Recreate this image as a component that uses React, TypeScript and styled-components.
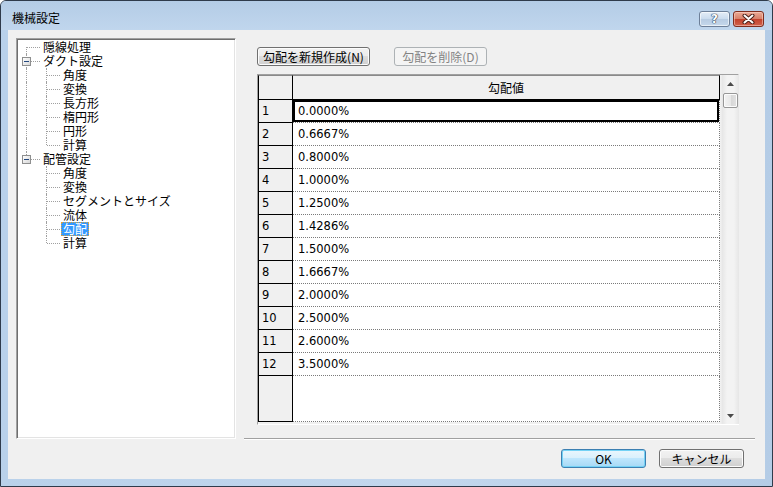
import React from 'react'
import styled, { createGlobalStyle } from 'styled-components'

const GlobalStyle = createGlobalStyle`
  html, body {
    margin: 0;
    padding: 0;
    background: #ffffff;
  }
  body {
    font-family: "Noto Sans CJK JP", "DejaVu Sans", sans-serif;
    font-size: 12px;
    color: #000;
  }
`

const Window = styled.div`
  box-sizing: border-box;
  width: 773px;
  height: 487px;
  border: 1px solid #2f3b4b;
  border-radius: 6px 6px 0 0;
  background: linear-gradient(to right, #b9d1ea, #c3d7ed 55%, #b4cce6);
  display: flex;
  flex-direction: column;
  overflow: hidden;
`

const TitleBar = styled.div`
  height: 29px;
  flex: none;
  display: flex;
  align-items: flex-start;
  justify-content: space-between;
  padding: 0 8px 0 11px;
  background: linear-gradient(to bottom, #b4cce6, #c0d6ed);
`

const TitleText = styled.span`
  margin-top: 9px;
  line-height: 16px;
  font-size: 12px;
`

const CaptionButtons = styled.div`
  display: flex;
  gap: 3px;
  margin-top: 10px;
`

const HelpButton = styled.div`
  box-sizing: border-box;
  width: 31px;
  height: 16px;
  border: 1px solid #6d7f98;
  border-radius: 3px;
  background: linear-gradient(to bottom, #e4edf7, #cadbee 50%, #b7cbe2 51%, #c5d8ec);
  box-shadow: inset 0 0 0 1px rgba(255, 255, 255, 0.6);
  display: flex;
  align-items: center;
  justify-content: center;
  font-family: "DejaVu Sans", sans-serif;
  font-weight: bold;
  font-size: 12px;
  color: #fff;
  text-shadow: 0 0 1px #1e2f4a, 0 0 1px #1e2f4a, 0 0 1px #1e2f4a;
`

const CloseButton = styled.div`
  box-sizing: border-box;
  width: 31px;
  height: 16px;
  border: 1px solid #7e2d1e;
  border-radius: 3px;
  background: linear-gradient(to bottom, #eaa995, #d8816b 48%, #c4422c 52%, #d0624c);
  box-shadow: inset 0 0 0 1px rgba(255, 220, 210, 0.5);
  display: flex;
  align-items: center;
  justify-content: center;
`

const Client = styled.div`
  flex: 1;
  margin: 0 7px 7px 7px;
  background: #f0f0f0;
  padding: 8px 10px 0 8px;
  display: flex;
  flex-direction: column;
`

const MainRow = styled.div`
  display: flex;
  gap: 8px;
  height: 401px;
`

const TreeBox = styled.div`
  box-sizing: border-box;
  width: 220px;
  height: 401px;
  flex: none;
  background: #fff;
  border: 1px solid;
  border-color: #a0a0a0 #ffffff #ffffff #a0a0a0;
  box-shadow: inset 1px 1px 0 #6e6e6e, inset -1px -1px 0 #e3e3e3;
  padding: 1px 0 0 1px;
`

const TreeRow = styled.div`
  display: flex;
  align-items: center;
  height: 14px;
`

type GuideKind = 'first' | 'branch' | 'last' | 'pipe' | 'blank'

const Guide = styled.span<{ $kind: GuideKind }>`
  position: relative;
  flex: none;
  width: 20px;
  height: 14px;

  &::before {
    content: '';
    display: ${p => (p.$kind === 'blank' ? 'none' : 'block')};
    position: absolute;
    left: 8px;
    top: ${p => (p.$kind === 'first' ? '7px' : '0')};
    bottom: ${p => (p.$kind === 'last' ? '7px' : '0')};
    border-left: 1px dotted #a0a0a0;
  }

  &::after {
    content: '';
    display: ${p => (p.$kind === 'pipe' || p.$kind === 'blank' ? 'none' : 'block')};
    position: absolute;
    left: 9px;
    top: 7px;
    width: 13px;
    border-top: 1px dotted #a0a0a0;
  }
`

const ExpandBox = styled.span`
  position: absolute;
  z-index: 1;
  left: 4px;
  top: 3px;
  box-sizing: border-box;
  width: 9px;
  height: 9px;
  border: 1px solid #8e8f8f;
  background: linear-gradient(to bottom right, #ffffff, #d7d7d7);

  &::after {
    content: '';
    position: absolute;
    left: 1px;
    top: 3px;
    width: 5px;
    height: 1px;
    background: #24487e;
  }
`

const TreeLabel = styled.span<{ $selected?: boolean }>`
  margin-left: 3px;
  padding: 0 2px;
  height: 14px;
  line-height: 14px;
  white-space: nowrap;
  font-size: 12px;
  color: ${p => (p.$selected ? '#ffffff' : '#000000')};
  background: ${p => (p.$selected ? '#3399ff' : 'transparent')};
  outline: ${p => (p.$selected ? '1px dotted #d9a443' : 'none')};
  outline-offset: -1px;
`

const RightPanel = styled.div`
  box-sizing: border-box;
  flex: 1;
  height: 401px;
  padding: 9px 0 0 13px;
  border-bottom: 1px solid #a0a0a0;
  box-shadow: 0 1px 0 #ffffff;
  display: flex;
  flex-direction: column;
`

const ButtonBar = styled.div`
  display: flex;
  gap: 24px;
`

type ButtonKind = 'normal' | 'default' | 'disabled'

const Button = styled.div<{ $width: number; $kind?: ButtonKind }>`
  box-sizing: border-box;
  width: ${p => p.$width}px;
  height: 19px;
  border-radius: 3px;
  display: flex;
  align-items: center;
  justify-content: center;
  font-size: 12px;
  line-height: 14px;
  white-space: nowrap;
  border: 1px solid
    ${p => (p.$kind === 'disabled' ? '#adb2b5' : p.$kind === 'default' ? '#3c7fb1' : '#707070')};
  color: ${p => (p.$kind === 'disabled' ? '#838383' : '#000000')};
  background: ${p =>
    p.$kind === 'disabled'
      ? '#f4f4f4'
      : p.$kind === 'default'
        ? 'linear-gradient(to bottom, #eaf6fd 0%, #d9f0fc 49%, #bee6fd 50%, #a7d9f5 100%)'
        : 'linear-gradient(to bottom, #f2f2f2 0%, #ebebeb 49%, #dddddd 50%, #cfcfcf 100%)'};
  box-shadow: ${p =>
    p.$kind === 'disabled'
      ? 'none'
      : p.$kind === 'default'
        ? 'inset 0 0 0 1px #74d2f5'
        : 'inset 0 0 0 1px #fcfcfc'};
`

const Grid = styled.div`
  box-sizing: border-box;
  margin-top: 8px;
  width: 482px;
  height: 351px;
  border: 1px solid;
  border-color: #a0a0a0 #ffffff #ffffff #a0a0a0;
  background: #f0f0f0;
  display: flex;
`

const GridBody = styled.div`
  width: 463px;
  flex: none;
  display: grid;
  grid-template-columns: 35px 427px;
  align-content: start;
`

const HeadCell = styled.div<{ $corner?: boolean }>`
  box-sizing: border-box;
  height: 25px;
  background: #f0f0f0;
  border-top: 1px solid #8a8a8a;
  border-bottom: 1px solid #000;
  border-right: 1px solid #000;
  border-left: ${p => (p.$corner ? '1px solid #000' : 'none')};
  display: flex;
  align-items: center;
  justify-content: center;
  font-size: 12px;
`

const RowHead = styled.div<{ $height?: number }>`
  box-sizing: border-box;
  height: ${p => p.$height ?? 23}px;
  background: #f0f0f0;
  border-left: 1px solid #000;
  border-right: 1px solid #000;
  border-bottom: 1px solid #000;
  padding-left: 3px;
  display: flex;
  align-items: center;
  font-family: "DejaVu Sans", sans-serif;
  font-size: 11.5px;
`

const DataCell = styled.div<{ $height?: number; $active?: boolean }>`
  box-sizing: border-box;
  height: ${p => p.$height ?? 23}px;
  background: #fff;
  border-right: 1px dotted #7a7a7a;
  border-bottom: 1px dotted #7a7a7a;
  padding-left: 5px;
  display: flex;
  align-items: center;
  font-family: "DejaVu Sans", sans-serif;
  font-size: 11.5px;
  box-shadow: ${p => (p.$active ? 'inset 0 0 0 2px #000' : 'none')};
`

const ScrollBar = styled.div`
  width: 17px;
  flex: none;
  display: flex;
  flex-direction: column;
  align-items: center;
  background: linear-gradient(to right, #e6e6e6, #f3f3f3 30%, #f3f3f3 70%, #e6e6e6);
  border-left: 1px solid #ececec;
`

const ScrollArrow = styled.div`
  width: 17px;
  height: 17px;
  flex: none;
  display: flex;
  align-items: center;
  justify-content: center;
`

const ScrollThumb = styled.div`
  box-sizing: border-box;
  width: 15px;
  height: 15px;
  flex: none;
  margin-top: 1px;
  border: 1px solid #979797;
  border-radius: 2px;
  background: linear-gradient(to right, #f3f3f3, #e8e8e8 50%, #d6d6d6 51%, #e2e2e2);
  box-shadow: inset 0 0 0 1px #fcfcfc;
`

const ScrollTrack = styled.div`
  flex: 1;
`

const Footer = styled.div`
  display: flex;
  justify-content: flex-end;
  gap: 13px;
  padding: 10px 11px 0 0;
`

const Arrow = ({ down }: { down?: boolean }) => (
  <svg width="7" height="4" viewBox="0 0 7 4">
    <path d={down ? 'M0 0 L7 0 L3.5 4 Z' : 'M0 4 L7 4 L3.5 0 Z'} fill="#4a4a4a" />
  </svg>
)

interface TreeNode {
  label: string
  guides: GuideKind[]
  box?: boolean
  selected?: boolean
}

const treeRows: TreeNode[] = [
  { label: '隠線処理', guides: ['first'] },
  { label: 'ダクト設定', guides: ['branch'], box: true },
  { label: '角度', guides: ['pipe', 'branch'] },
  { label: '変換', guides: ['pipe', 'branch'] },
  { label: '長方形', guides: ['pipe', 'branch'] },
  { label: '楕円形', guides: ['pipe', 'branch'] },
  { label: '円形', guides: ['pipe', 'branch'] },
  { label: '計算', guides: ['pipe', 'last'] },
  { label: '配管設定', guides: ['last'], box: true },
  { label: '角度', guides: ['blank', 'branch'] },
  { label: '変換', guides: ['blank', 'branch'] },
  { label: 'セグメントとサイズ', guides: ['blank', 'branch'] },
  { label: '流体', guides: ['blank', 'branch'] },
  { label: '勾配', guides: ['blank', 'branch'], selected: true },
  { label: '計算', guides: ['blank', 'last'] },
]

const slopes = [
  '0.0000%', '0.6667%', '0.8000%', '1.0000%', '1.2500%', '1.4286%',
  '1.5000%', '1.6667%', '2.0000%', '2.5000%', '2.6000%', '3.5000%',
]

const App = () => {
  return (
    <>
      <GlobalStyle />
      <Window>
        <TitleBar>
          <TitleText>機械設定</TitleText>
          <CaptionButtons>
            <HelpButton>?</HelpButton>
            <CloseButton>
              <svg width="13" height="10" viewBox="0 0 13 10">
                <path d="M2.5 1.5 L10.5 8.5 M10.5 1.5 L2.5 8.5" stroke="#4a1e16" strokeWidth="4" strokeLinecap="round" />
                <path d="M2.5 1.5 L10.5 8.5 M10.5 1.5 L2.5 8.5" stroke="#ffffff" strokeWidth="2" strokeLinecap="round" />
              </svg>
            </CloseButton>
          </CaptionButtons>
        </TitleBar>

        <Client>
          <MainRow>
            <TreeBox>
              {treeRows.map((row, i) => (
                <TreeRow key={i}>
                  {row.guides.map((g, j) => (
                    <Guide key={j} $kind={g}>
                      {row.box && j === row.guides.length - 1 && <ExpandBox />}
                    </Guide>
                  ))}
                  <TreeLabel $selected={row.selected}>{row.label}</TreeLabel>
                </TreeRow>
              ))}
            </TreeBox>

            <RightPanel>
              <ButtonBar>
                <Button $width={113}>勾配を新規作成(N)</Button>
                <Button $width={93} $kind="disabled">勾配を削除(D)</Button>
              </ButtonBar>

              <Grid>
                <GridBody>
                  <HeadCell $corner />
                  <HeadCell>勾配値</HeadCell>
                  {slopes.map((v, i) => (
                    <React.Fragment key={i}>
                      <RowHead>{i + 1}</RowHead>
                      <DataCell $active={i === 0}>{v}</DataCell>
                    </React.Fragment>
                  ))}
                  <RowHead $height={46} />
                  <DataCell $height={46} />
                </GridBody>
                <ScrollBar>
                  <ScrollArrow><Arrow /></ScrollArrow>
                  <ScrollThumb />
                  <ScrollTrack />
                  <ScrollArrow><Arrow down /></ScrollArrow>
                </ScrollBar>
              </Grid>
            </RightPanel>
          </MainRow>

          <Footer>
            <Button $width={85} $kind="default">OK</Button>
            <Button $width={85}>キャンセル</Button>
          </Footer>
        </Client>
      </Window>
    </>
  )
}

export default App
